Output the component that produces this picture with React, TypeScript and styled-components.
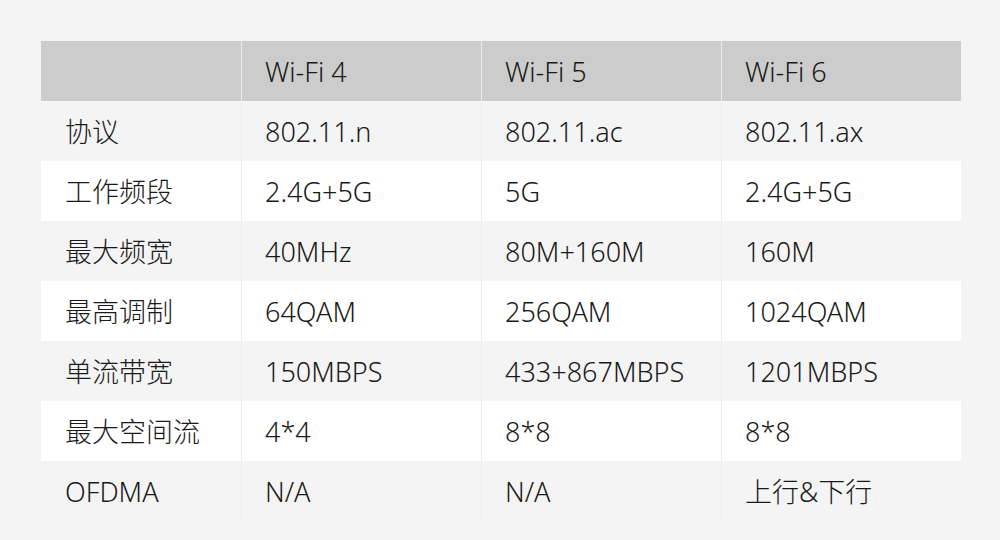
import styled, { createGlobalStyle } from 'styled-components';

const GlobalStyle = createGlobalStyle`
  html, body {
    margin: 0;
    padding: 0;
    background: #f4f4f4;
  }
  body {
    font-family: "Noto Sans", "Noto Sans CJK SC", sans-serif;
    color: #1a1a1a;
  }
`;

const Page = styled.div`
  width: 1000px;
  height: 540px;
  padding: 41px 0 0 41px;
  box-sizing: border-box;
`;

const Table = styled.div`
  width: 920px;
  display: grid;
  grid-template-columns: 200px 240px 240px 240px;
`;

const Cell = styled.div<{ bg: string; first?: boolean }>`
  height: 60px;
  box-sizing: border-box;
  display: flex;
  align-items: center;
  padding-left: ${(p) => (p.first ? '24px' : '23px')};
  background: ${(p) => p.bg};
  border-left: ${(p) => (p.first ? 'none' : '1px solid #ececec')};
  font-size: 27px;
  font-weight: 300;
  line-height: 1;
  white-space: nowrap;
`;

const header = ['', 'Wi-Fi 4', 'Wi-Fi 5', 'Wi-Fi 6'];

const rows = [
  ['协议', '802.11.n', '802.11.ac', '802.11.ax'],
  ['工作频段', '2.4G+5G', '5G', '2.4G+5G'],
  ['最大频宽', '40MHz', '80M+160M', '160M'],
  ['最高调制', '64QAM', '256QAM', '1024QAM'],
  ['单流带宽', '150MBPS', '433+867MBPS', '1201MBPS'],
  ['最大空间流', '4*4', '8*8', '8*8'],
  ['OFDMA', 'N/A', 'N/A', '上行&下行'],
];

export default function App() {
  return (
    <Page>
      <GlobalStyle />
      <Table>
        {header.map((h, i) => (
          <Cell key={'h' + i} bg="#cccccc" first={i === 0}>
            {h}
          </Cell>
        ))}
        {rows.map((r, ri) =>
          r.map((c, ci) => (
            <Cell key={ri + '-' + ci} bg={ri % 2 === 0 ? '#f4f4f4' : '#ffffff'} first={ci === 0}>
              {c}
            </Cell>
          ))
        )}
      </Table>
    </Page>
  );
}
